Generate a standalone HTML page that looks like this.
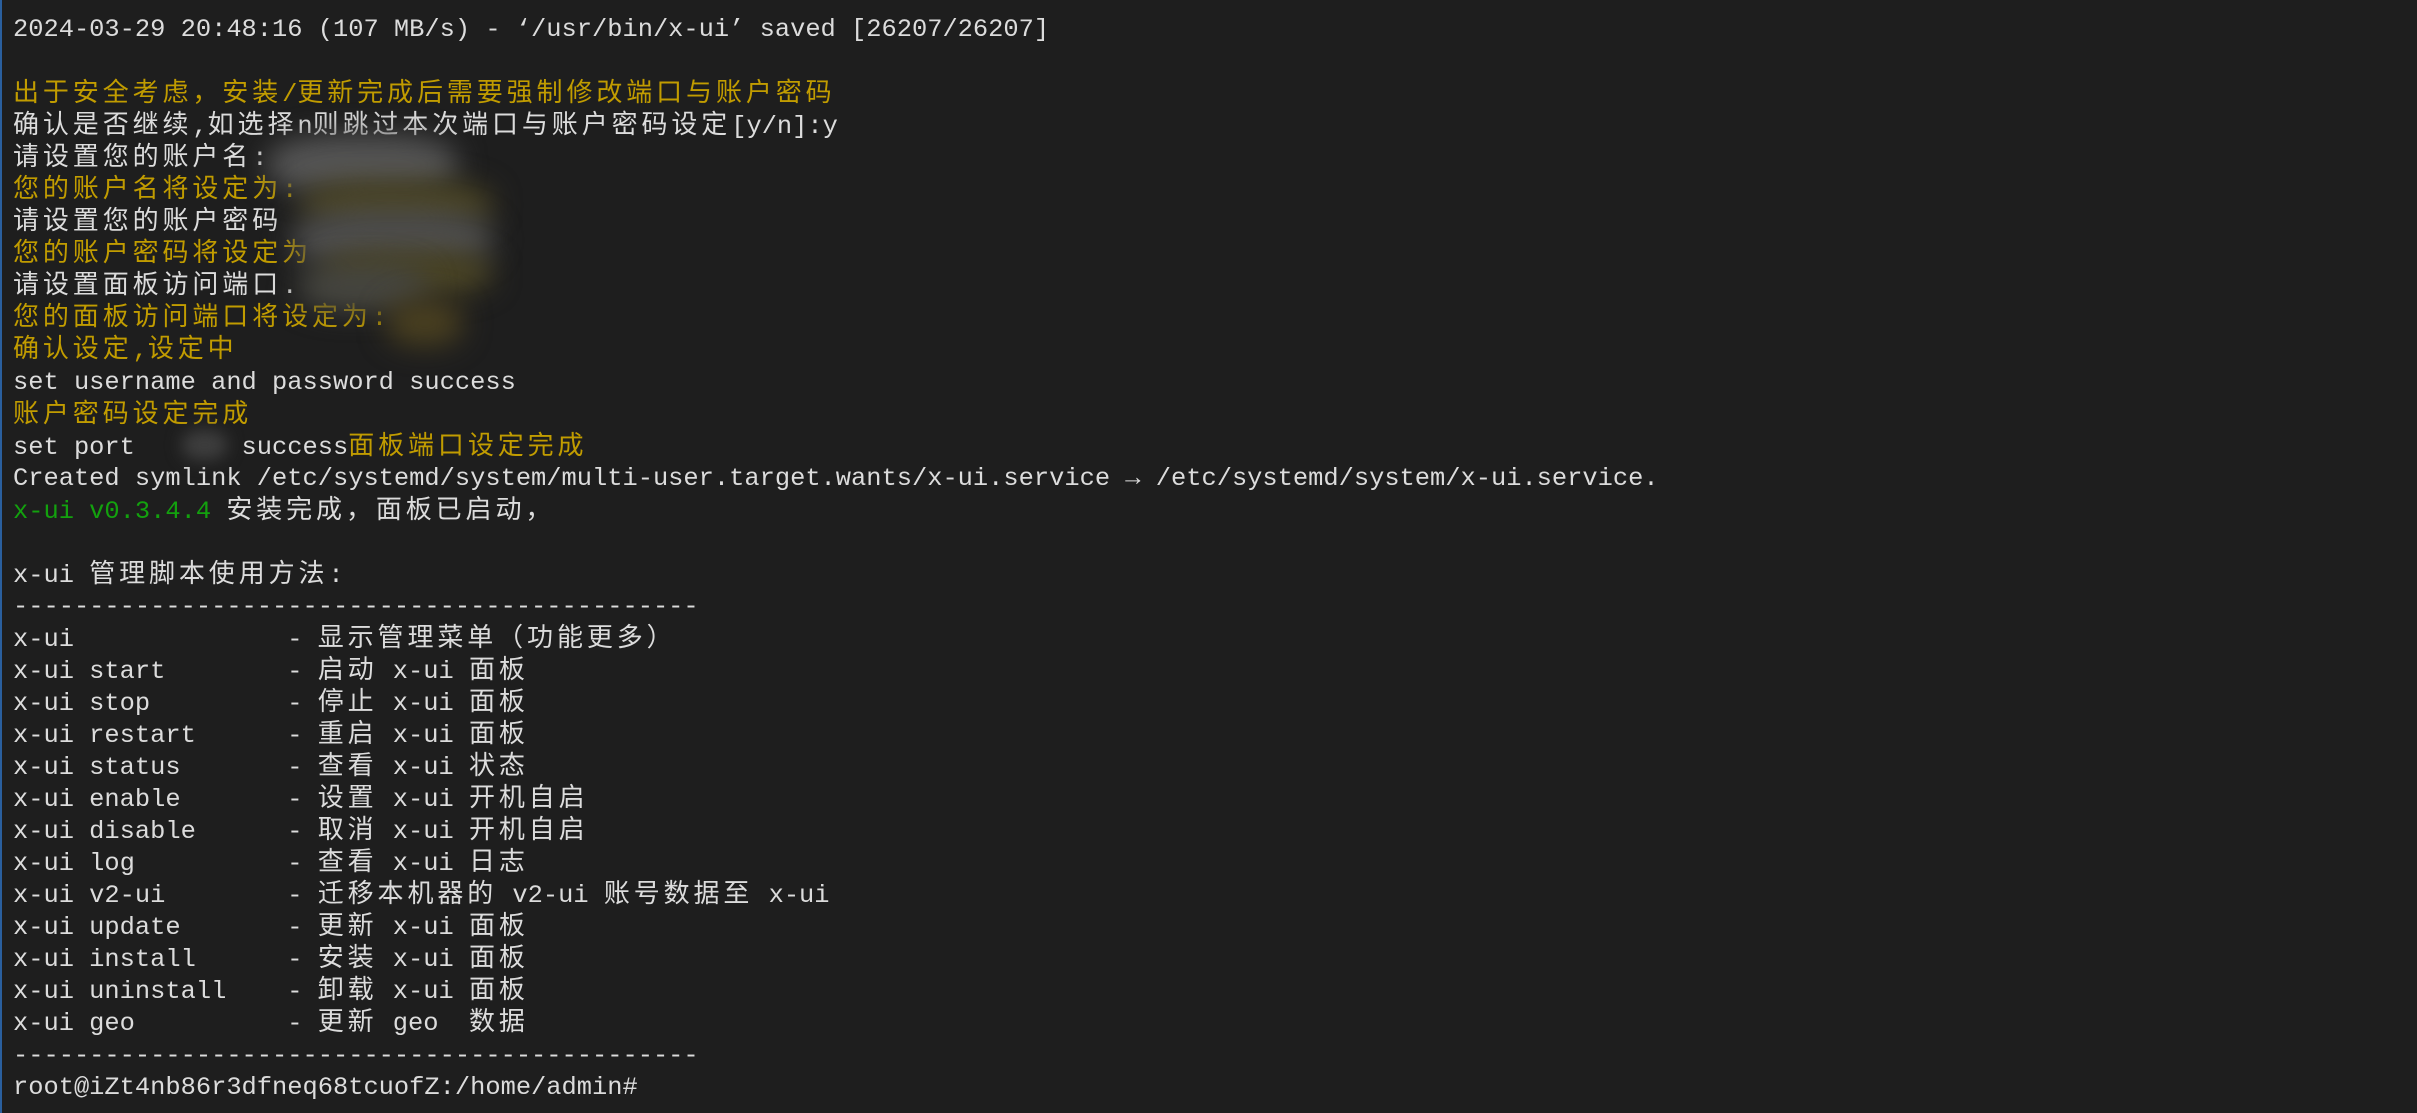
<!DOCTYPE html>
<html><head><meta charset="utf-8"><style>
html,body{margin:0;padding:0;background:#1e1e1e;width:2417px;height:1113px;overflow:hidden}
body{position:relative;border-left:2px solid #2a5f9e;box-sizing:border-box}
#t{position:absolute;left:11px;top:14px;font-family:"Liberation Mono","Noto Sans CJK SC",monospace;font-size:25.4px;line-height:32.05px;color:#dcdcdc}
#t div{height:32.05px;white-space:pre;overflow:visible}
b{font-weight:normal;letter-spacing:3.9px;font-family:"Noto Sans CJK SC",sans-serif;font-size:26px;line-height:1}
.y{color:#c19c00}.g{color:#13a10e}
.bl{position:absolute;border-radius:40%;filter:blur(14px)}
</style></head><body>
<div id="t"><div>2024-03-29 20:48:16 (107 MB/s) - ‘/usr/bin/x-ui’ saved [26207/26207]</div><div> </div><div class="y"><b>出于安全考虑，安装</b>/<b>更新完成后需要强制修改端口与账户密码</b></div><div><b>确认是否继续</b>,<b>如选择</b>n<b>则跳过本次端口与账户密码设定</b>[y/n]:y</div><div><b>请设置您的账户名</b>:</div><div class="y"><b>您的账户名将设定为</b>:</div><div><b>请设置您的账户密码</b></div><div class="y"><b>您的账户密码将设定为</b></div><div><b>请设置面板访问端口</b>.</div><div class="y"><b>您的面板访问端口将设定为</b>:</div><div class="y"><b>确认设定</b>,<b>设定中</b></div><div>set username and password success</div><div class="y"><b>账户密码设定完成</b></div><div>set port       success<span class="y"><b>面板端口设定完成</b></span></div><div>Created symlink /etc/systemd/system/multi-user.target.wants/x-ui.service → /etc/systemd/system/x-ui.service.</div><div><span class="g">x-ui v0.3.4.4</span> <b>安装完成，面板已启动，</b></div><div> </div><div>x-ui <b>管理脚本使用方法</b>:</div><div>---------------------------------------------</div><div>x-ui              - <b>显示管理菜单（功能更多）</b></div><div>x-ui start        - <b>启动</b> x-ui <b>面板</b></div><div>x-ui stop         - <b>停止</b> x-ui <b>面板</b></div><div>x-ui restart      - <b>重启</b> x-ui <b>面板</b></div><div>x-ui status       - <b>查看</b> x-ui <b>状态</b></div><div>x-ui enable       - <b>设置</b> x-ui <b>开机自启</b></div><div>x-ui disable      - <b>取消</b> x-ui <b>开机自启</b></div><div>x-ui log          - <b>查看</b> x-ui <b>日志</b></div><div>x-ui v2-ui        - <b>迁移本机器的</b> v2-ui <b>账号数据至</b> x-ui</div><div>x-ui update       - <b>更新</b> x-ui <b>面板</b></div><div>x-ui install      - <b>安装</b> x-ui <b>面板</b></div><div>x-ui uninstall    - <b>卸载</b> x-ui <b>面板</b></div><div>x-ui geo          - <b>更新</b> geo  <b>数据</b></div><div>---------------------------------------------</div><div>root@iZt4nb86r3dfneq68tcuofZ:/home/admin#</div></div>
<div class="bl" style="left:265px;top:135px;width:190px;height:60px;background:#555"></div>
<div class="bl" style="left:300px;top:180px;width:190px;height:50px;background:#4a4424"></div>
<div class="bl" style="left:290px;top:210px;width:200px;height:60px;background:#4e4e4e"></div>
<div class="bl" style="left:320px;top:250px;width:170px;height:45px;background:#4a4424"></div>
<div class="bl" style="left:295px;top:265px;width:130px;height:45px;background:#454540"></div>
<div class="bl" style="left:385px;top:300px;width:75px;height:45px;background:#4a4020"></div>
<div class="bl" style="left:180px;top:430px;width:45px;height:30px;background:#3e3e3e;filter:blur(8px)"></div>
</body></html>
